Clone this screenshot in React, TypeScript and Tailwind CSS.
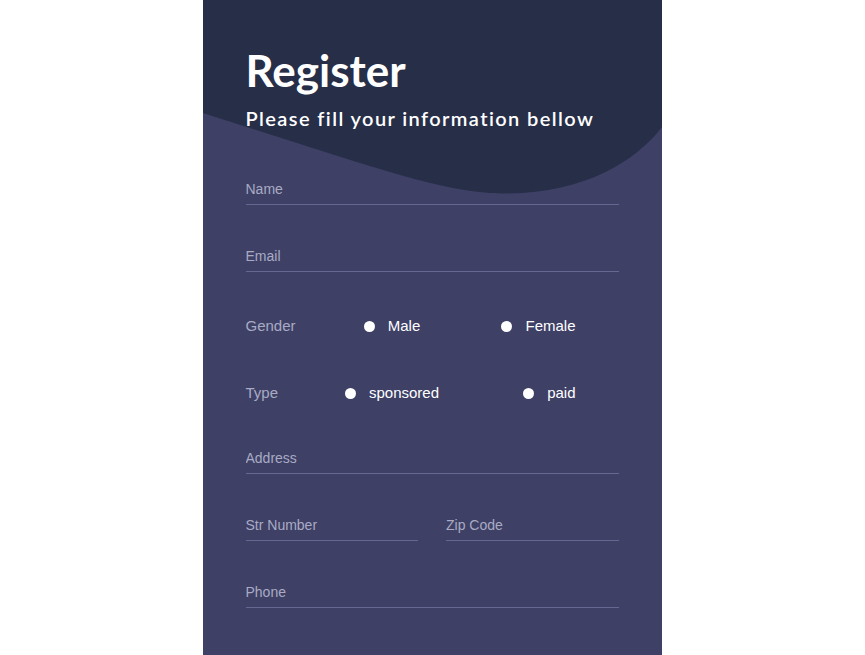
import React, { useState } from 'react';

const labelCls = "text-[14px] leading-[20px] text-[#a9abc4] [font-family:'Liberation_Sans',Arial,sans-serif]";

const Field = ({ label, className = '' }: { label: string; className?: string }) => (
  <div className={`border-b border-[#666893] pb-[5px] ${className}`}>
    <input
      placeholder={label}
      className={`block w-full h-[20px] p-0 bg-transparent outline-none placeholder:text-[#a9abc4] ${labelCls}`}
    />
  </div>
);

const Radio = ({ label, checked, onClick }: { label: string; checked: boolean; onClick: () => void }) => (
  <button onClick={onClick} className="flex items-center gap-[13px]">
    <span className="w-[11px] h-[11px] rounded-full bg-white" />
    <span className="text-[15px] leading-[20px] text-white [font-family:'Liberation_Sans',Arial,sans-serif]">{label}</span>
  </button>
);

const RadioRow = ({ label, options, value, onChange, className = '' }: {
  label: string; options: [string, string]; value: string; onChange: (v: string) => void; className?: string;
}) => (
  <div className={`flex items-center h-[20px] ${className}`}>
    <span className="w-[100px] text-[15px] leading-[20px] text-[#a9abc4] [font-family:'Liberation_Sans',Arial,sans-serif]">{label}</span>
    <div className="w-[93px] flex justify-center">
      <Radio label={options[0]} checked={value === options[0]} onClick={() => onChange(options[0])} />
    </div>
    <div className="flex-1 flex justify-end pr-[43px]">
      <Radio label={options[1]} checked={value === options[1]} onClick={() => onChange(options[1])} />
    </div>
  </div>
);

const App: React.FC = () => {
  const [gender, setGender] = useState('');
  const [type, setType] = useState('');

  return (
    <div className="w-[865px] h-[655px] bg-white flex justify-center overflow-hidden">
      <div className="relative w-[459px] h-[655px] bg-[#3e4066] ml-[-1px]">
        {/* header wave */}
        <svg className="absolute top-0 left-0" width="459" height="200" viewBox="0 0 459 200">
          <path d="M0 0 H459 V127 C432 162 380 194 300 193.5 C240 193 170 167 0 113 Z" fill="#272e48" />
        </svg>

        <div className="relative px-[43px] pt-[44px]">
          <h1 className="text-[44px] leading-[52px] font-bold text-white [font-family:Lato,'Noto_Sans',sans-serif]">Register</h1>
          <p className="mt-[9px] text-[20px] leading-[26px] font-semibold tracking-[1.4px] text-white [font-family:Lato,'Noto_Sans',sans-serif]">
            Please fill your information bellow
          </p>

          <form className="mt-[48px] flex flex-col" onSubmit={e => e.preventDefault()}>
            <Field label="Name" />
            <Field label="Email" className="mt-[41px]" />
            <RadioRow label="Gender" options={['Male', 'Female']} value={gender} onChange={setGender} className="mt-[44px]" />
            <RadioRow label="Type" options={['sponsored', 'paid']} value={type} onChange={setType} className="mt-[47px]" />
            <Field label="Address" className="mt-[45px]" />
            <div className="mt-[41px] flex gap-[28px]">
              <Field label="Str Number" className="flex-1" />
              <Field label="Zip Code" className="flex-1" />
            </div>
            <Field label="Phone" className="mt-[41px]" />
          </form>
        </div>
      </div>
    </div>
  );
};

export default App;
